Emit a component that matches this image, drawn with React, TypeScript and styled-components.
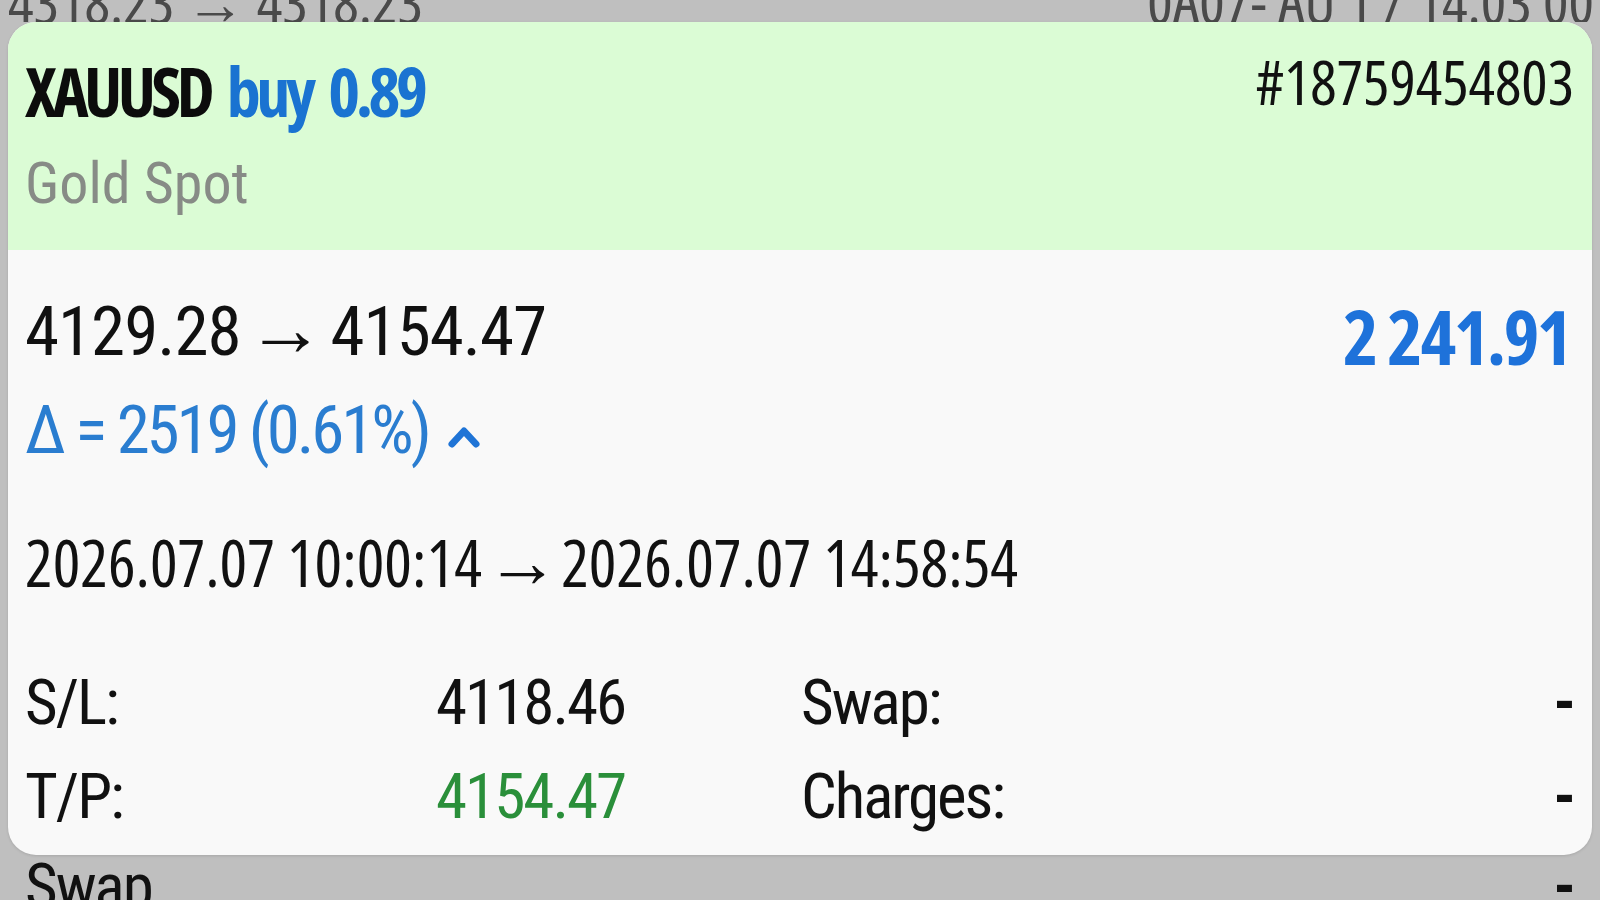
import { createGlobalStyle, styled } from "styled-components";

const GlobalStyle = createGlobalStyle`
  html, body {
    margin: 0;
    padding: 0;
    background: #bfbfbf;
    overflow: hidden;
  }
  body {
    font-family: "Roboto Condensed", "Roboto", "Liberation Sans", sans-serif;
    font-stretch: 75%;
    color: #111;
  }
`;

const narrow = `
  font-family: "Open Sans", "Roboto", sans-serif;
  font-stretch: 75%;
`;

const Page = styled.div`
  width: 1600px;
  height: 900px;
  display: flex;
  flex-direction: column;
  overflow: hidden;
`;

const TopStrip = styled.div`
  ${narrow}
  height: 22px;
  display: flex;
  justify-content: space-between;
  align-items: flex-end;
  padding: 0 6px 0 8px;
  overflow: hidden;
  flex-shrink: 0;
  font-size: 60px;
  line-height: 1;
  color: #4a4a4a;
`;

const TopText = styled.span`
  margin-bottom: -9px;
`;

const BottomStrip = styled.div`
  display: flex;
  justify-content: space-between;
  padding: 0 24px 0 25px;
  font-size: 63px;
  line-height: 1;
  letter-spacing: -2px;
  color: #111;
  flex-shrink: 0;
`;

const Card = styled.div`
  margin: 0 8px;
  border-radius: 28px;
  overflow: hidden;
  background: #f9f9f9;
  box-shadow: 0 1px 3px rgba(0, 0, 0, 0.12);
  flex-shrink: 0;
`;

const Header = styled.div`
  background: #dbfcd5;
  padding: 34px 18px 38px 17px;
`;

const TitleRow = styled.div`
  display: flex;
  justify-content: space-between;
  align-items: flex-start;
`;

const Title = styled.div`
  ${narrow}
  font-size: 68px;
  line-height: 1;
  font-weight: 700;
  letter-spacing: -4.5px;
  word-spacing: 9px;
  margin-top: 1px;
  color: #0c0c0c;
`;

const Side = styled.span`
  color: #1a73d1;
`;

const Ticket = styled.div`
  ${narrow}
  font-size: 62px;
  line-height: 1;
  margin-top: -6px;
  color: #111;
`;

const Subtitle = styled.div`
  margin-top: 29px;
  font-size: 58px;
  line-height: 1;
  color: #878b86;
`;

const Body = styled.div`
  padding: 47px 16px 27px 17px;
`;

const PriceRow = styled.div`
  display: flex;
  justify-content: space-between;
  align-items: flex-start;
`;

const Prices = styled.div`
  font-size: 69px;
  line-height: 1;
  letter-spacing: -1px;
`;

const Arrow = styled.span<{ $before: number; $after: number }>`
  font-family: "Roboto", sans-serif;
  font-stretch: 100%;
  font-size: 1.13em;
  line-height: 0;
  letter-spacing: 0;
  margin: 0 ${(p) => p.$after}px 0 ${(p) => p.$before}px;
`;

const Profit = styled.div`
  margin: 1px 6px 0 0;
  ${narrow}
  font-size: 76px;
  line-height: 1;
  font-weight: 700;
  letter-spacing: -2.5px;
  color: #1e72da;
`;

const Delta = styled.div`
  margin-top: 23px;
  font-size: 67px;
  line-height: 1;
  letter-spacing: -3.1px;
  color: #2a7dd0;
  display: flex;
  align-items: center;
  gap: 18px;
`;

const Chevron = styled.svg`
  width: 34px;
  height: 26px;
  margin-top: 10px;
`;

const Dates = styled.div`
  ${narrow}
  margin-top: 66px;
  font-size: 65px;
  line-height: 1;
`;

const Details = styled.div`
  margin-top: 76px;
  display: grid;
  grid-template-columns: 411px 365px 1fr auto;
  row-gap: 31px;
  font-size: 63px;
  line-height: 1;
  letter-spacing: -2px;
`;

const Cell = styled.div<{ $color?: string }>`
  color: ${(p) => p.$color ?? "#111"};
`;

const Dash = styled.div`
  text-align: right;
  font-weight: 700;
  letter-spacing: 0;
`;

export default function App() {
  return (
    <>
      <GlobalStyle />
      <Page>
        <TopStrip>
          <TopText>4318.23 → 4318.23</TopText>
          <TopText>0A07- AU 1 / 14:03 00</TopText>
        </TopStrip>
        <Card>
          <Header>
            <TitleRow>
              <Title>
                XAUUSD <Side>buy 0.89</Side>
              </Title>
              <Ticket>#18759454803</Ticket>
            </TitleRow>
            <Subtitle>Gold Spot</Subtitle>
          </Header>
          <Body>
            <PriceRow>
              <Prices>
                4129.28
                <Arrow $before={6} $after={6}>
                  →
                </Arrow>
                4154.47
              </Prices>
              <Profit>2 241.91</Profit>
            </PriceRow>
            <Delta>
              <span>Δ = 2519 (0.61%)</span>
              <Chevron viewBox="0 0 34 26">
                <polyline
                  points="5,21 17,8 29,21"
                  fill="none"
                  stroke="#1f74d6"
                  strokeWidth="7"
                  strokeLinecap="round"
                  strokeLinejoin="round"
                />
              </Chevron>
            </Delta>
            <Dates>
              2026.07.07 10:00:14
              <Arrow $before={4} $after={2}>
                →
              </Arrow>
              2026.07.07 14:58:54
            </Dates>
            <Details>
              <Cell>S/L:</Cell>
              <Cell>4118.46</Cell>
              <Cell>Swap:</Cell>
              <Dash>-</Dash>
              <Cell>T/P:</Cell>
              <Cell $color="#2a8f3a">4154.47</Cell>
              <Cell>Charges:</Cell>
              <Dash>-</Dash>
            </Details>
          </Body>
        </Card>
        <BottomStrip>
          <span>Swap</span>
          <Dash>-</Dash>
        </BottomStrip>
      </Page>
    </>
  );
}
